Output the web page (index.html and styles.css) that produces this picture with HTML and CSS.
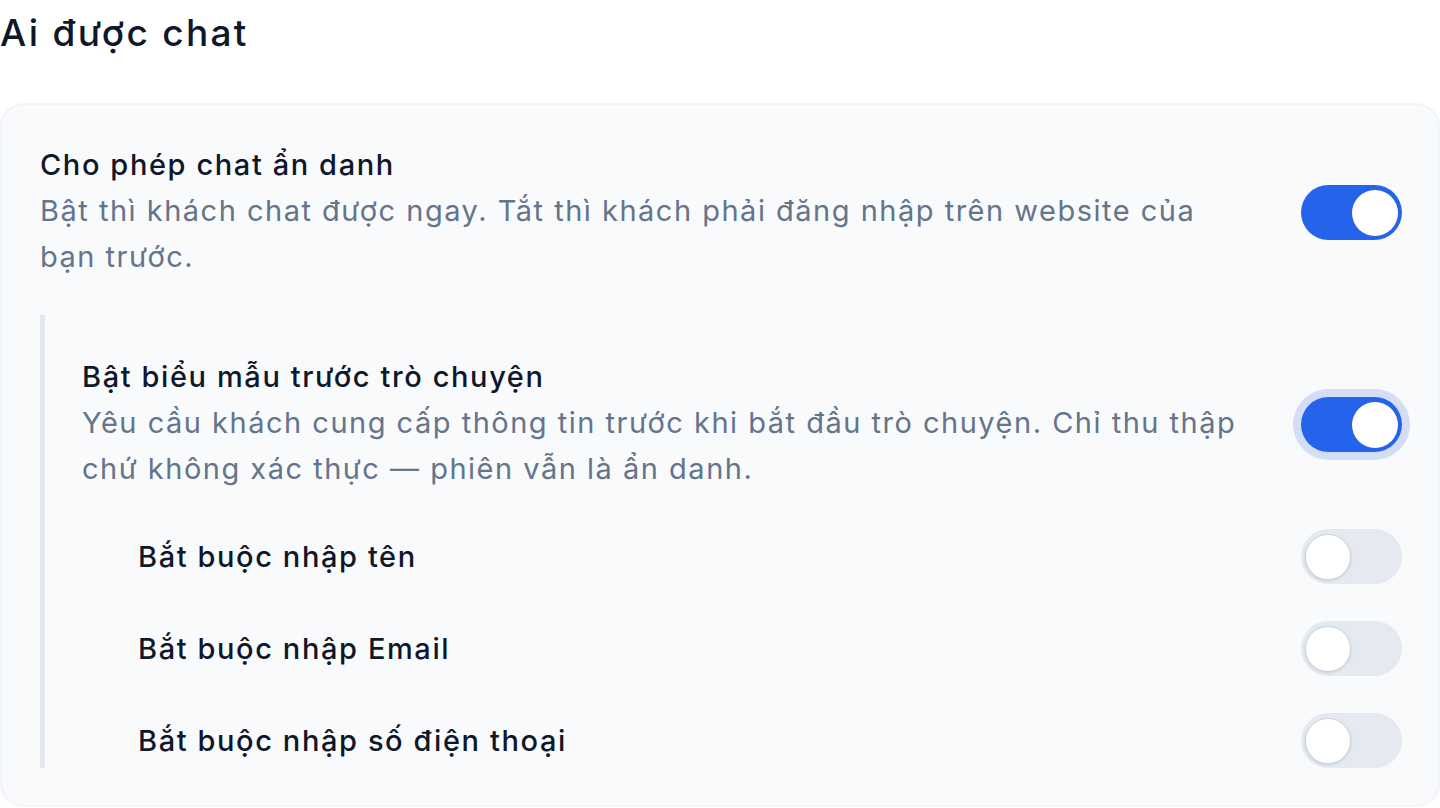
FILE: index.html
```html
<!DOCTYPE html>
<html>
<head>
    <meta charset="utf-8">
    <title>Ai được chat</title>
    <meta name="viewport" content="width=device-width, initial-scale=1">
    <link rel="stylesheet" href="styles.css">
</head>

<body>
    <section id="who-can-chat">
        <h2 class="title">Ai được chat</h2>

        <div class="card">
            <div class="setting">
                <div class="setting-text">
                    <p class="setting-label">Cho phép chat ẩn danh</p>
                    <p class="setting-desc">Bật thì khách chat được ngay. Tắt thì khách phải đăng nhập trên website của bạn trước.</p>
                </div>
                <span class="toggle on"><span class="knob"></span></span>
            </div>

            <div class="nested">
                <div class="setting">
                    <div class="setting-text">
                        <p class="setting-label">Bật biểu mẫu trước trò chuyện</p>
                        <p class="setting-desc">Yêu cầu khách cung cấp thông tin trước khi bắt đầu trò chuyện. Chỉ thu thập chứ không xác thực — phiên vẫn là ẩn danh.</p>
                    </div>
                    <span class="toggle on focus"><span class="knob"></span></span>
                </div>

                <div class="setting sub">
                    <p class="setting-label">Bắt buộc nhập tên</p>
                    <span class="toggle"><span class="knob"></span></span>
                </div>
                <div class="setting sub">
                    <p class="setting-label">Bắt buộc nhập Email</p>
                    <span class="toggle"><span class="knob"></span></span>
                </div>
                <div class="setting sub">
                    <p class="setting-label">Bắt buộc nhập số điện thoại</p>
                    <span class="toggle"><span class="knob"></span></span>
                </div>
            </div>
        </div>
    </section>
</body>
</html>
```

FILE: styles.css
```css
body {
	margin: 0;
	font-family: Inter, "Noto Sans", sans-serif;
	color: #0f172a;
	background: #fff;
}

p {
	margin: 0;
}

.title {
	margin: 0 0 46px 0;
	padding-top: 9px;
	font-size: 37px;
	line-height: 48px;
	letter-spacing: 2.3px;
	font-weight: 500;
}

.card {
	display: flex;
	flex-direction: column;
	gap: 35px;
	padding: 40px 36px 37px 38px;
	background: #f8fafc;
	border: 2px solid #f1f5f9;
	border-radius: 24px;
}

.setting {
	display: flex;
	align-items: center;
	justify-content: space-between;
	gap: 48px;
}

.setting-text {
	flex: 1;
}

.setting-label {
	font-size: 29px;
	line-height: 40px;
	letter-spacing: 1.6px;
	font-weight: 500;
}

.setting-desc {
	margin-top: 3px;
	font-size: 29px;
	line-height: 46px;
	letter-spacing: 1.5px;
	color: #64748b;
}

.nested {
	display: flex;
	flex-direction: column;
	gap: 37px;
	padding: 42px 0 0 37px;
	border-left: 5px solid #e2e8f0;
}

.sub {
	padding-left: 56px;
}

.toggle {
	flex-shrink: 0;
	display: flex;
	align-items: center;
	box-sizing: border-box;
	width: 101px;
	height: 55px;
	padding: 4px;
	border-radius: 28px;
	background: #e5e9f0;
}

.knob {
	width: 46px;
	height: 46px;
	box-sizing: border-box;
	border-radius: 50%;
	background: #fff;
	border: 1px solid #cbd5e1;
	box-shadow: 0 1px 3px rgba(15, 23, 42, .12);
}

.toggle.on {
	background: #2563eb;
	justify-content: flex-end;
}

.toggle.on .knob {
	border: none;
	box-shadow: none;
}

.toggle.focus {
	box-shadow: 0 0 0 8px #d3def6;
}
```
